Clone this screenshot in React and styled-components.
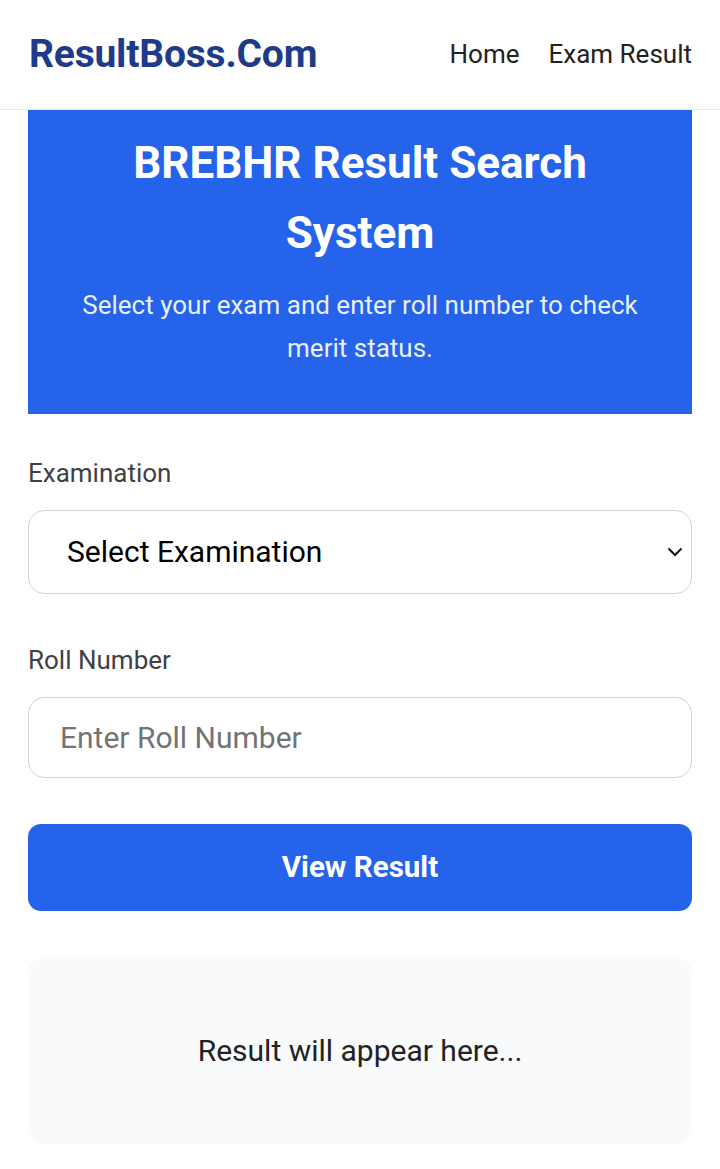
import React from "react";
import styled, { createGlobalStyle } from "styled-components";

const Global = createGlobalStyle`
  * { box-sizing: border-box; }
  html, body { margin: 0; padding: 0; background: #ffffff; }
  body { font-family: Roboto, "Liberation Sans", Arial, sans-serif; color: #222; }
`;

const Header = styled.header`
  height: 110px;
  border-bottom: 1px solid #e5e7eb;
  display: flex;
  align-items: center;
  justify-content: space-between;
  padding: 0 28px 2px 29px;
`;

const Logo = styled.div`
  font-size: 39px;
  font-weight: 700;
  color: #1e3a8a;
  letter-spacing: -0.2px;
`;

const Nav = styled.nav`
  display: flex;
  gap: 29px;
`;

const NavLink = styled.a`
  font-size: 26px;
  color: #222;
  text-decoration: none;
`;

const Main = styled.main`
  padding: 0 28px 40px;
`;

const Hero = styled.section`
  background: #2563eb;
  padding: 18px 32px 44px;
  text-align: center;
  color: #fff;
`;

const Title = styled.h1`
  margin: 0;
  font-size: 44px;
  font-weight: 700;
  line-height: 1.6;
`;

const Subtitle = styled.p`
  margin: 15px 0 0;
  font-size: 26px;
  line-height: 43px;
  color: rgba(255, 255, 255, 0.92);
`;

const Field = styled.div`
  margin-top: ${(p) => p.$top}px;
  display: flex;
  flex-direction: column;
`;

const Label = styled.label`
  font-size: 26px;
  line-height: 36px;
  color: #3f3f46;
  margin-bottom: 19px;
`;

const SelectWrap = styled.div`
  position: relative;
  height: 84px;
  border: 1px solid #d4d4d8;
  border-radius: 16px;
  display: flex;
  align-items: center;
  padding: 0 38px;
  font-size: 30px;
  color: #000;
`;

const Chevron = styled.svg`
  position: absolute;
  right: 8px;
  top: 50%;
  transform: translateY(-50%);
`;

const Input = styled.input`
  height: 81px;
  border: 1px solid #d4d4d8;
  border-radius: 16px;
  padding: 0 31px;
  font-family: Roboto, "Liberation Sans", Arial, sans-serif;
  font-size: 30px;
  color: #222;
  outline: none;
  &::placeholder { color: #737373; }
`;

const Button = styled.button`
  margin-top: 46px;
  width: 100%;
  height: 87px;
  border: none;
  border-radius: 13px;
  background: #2563eb;
  color: #fff;
  font-family: Roboto, "Liberation Sans", Arial, sans-serif;
  font-size: 29.5px;
  font-weight: 700;
`;

const ResultBox = styled.div`
  margin-top: 46px;
  height: 187px;
  background: #f8fafc;
  border-radius: 16px;
  display: flex;
  align-items: center;
  justify-content: center;
  font-size: 30px;
  color: #222;
`;

export default function App() {
  return (
    <>
      <Global />
      <Header>
        <Logo>ResultBoss.Com</Logo>
        <Nav>
          <NavLink href="#">Home</NavLink>
          <NavLink href="#">Exam Result</NavLink>
        </Nav>
      </Header>
      <Main>
        <Hero>
          <Title>BREBHR Result Search System</Title>
          <Subtitle>
            Select your exam and enter roll number to check merit status.
          </Subtitle>
        </Hero>
        <Field $top={41}>
          <Label>Examination</Label>
          <SelectWrap>
            Select Examination
            <Chevron width="16" height="10" viewBox="0 0 16 10" fill="none">
              <path d="M1.5 1.5 L8 8 L14.5 1.5" stroke="#111" strokeWidth="2" />
            </Chevron>
          </SelectWrap>
        </Field>
        <Field $top={48}>
          <Label>Roll Number</Label>
          <Input placeholder="Enter Roll Number" />
        </Field>
        <Button>View Result</Button>
        <ResultBox>Result will appear here...</ResultBox>
      </Main>
    </>
  );
}
